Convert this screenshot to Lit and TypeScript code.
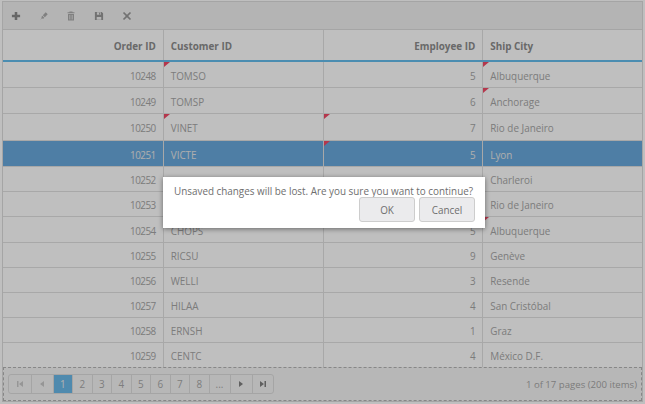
import { LitElement, css, html, nothing, svg } from 'lit';
import { customElement } from 'lit/decorators.js';

interface Order {
  id: number;
  customer: string;
  employee: number | string;
  city: string;
  dirty?: number[];
  selected?: boolean;
}

// customer / employee of 10252 and 10253 sit behind the dialog
const ORDERS: Order[] = [
  { id: 10248, customer: 'TOMSO', employee: 5, city: 'Albuquerque', dirty: [1, 3] },
  { id: 10249, customer: 'TOMSP', employee: 6, city: 'Anchorage', dirty: [3] },
  { id: 10250, customer: 'VINET', employee: 7, city: 'Rio de Janeiro', dirty: [1, 2] },
  { id: 10251, customer: 'VICTE', employee: 5, city: 'Lyon', dirty: [2], selected: true },
  { id: 10252, customer: '', employee: '', city: 'Charleroi' },
  { id: 10253, customer: '', employee: '', city: 'Rio de Janeiro' },
  { id: 10254, customer: 'CHOPS', employee: 5, city: 'Albuquerque', dirty: [3] },
  { id: 10255, customer: 'RICSU', employee: 9, city: 'Genève' },
  { id: 10256, customer: 'WELLI', employee: 3, city: 'Resende' },
  { id: 10257, customer: 'HILAA', employee: 4, city: 'San Cristóbal' },
  { id: 10258, customer: 'ERNSH', employee: 1, city: 'Graz' },
  { id: 10259, customer: 'CENTC', employee: 4, city: 'México D.F.' },
];

const TOOL_ICONS = [
  { tone: 'dark', d: svg`<path d="M4.1 1h2.8v3.1H10v2.8H6.9V10H4.1V6.9H1V4.1h3.1z"/>` },
  { tone: 'soft', d: svg`<path d="M7.4 1.4l2.2 2.2-3.2 3.2-2.2-2.2zM3.6 5.2l2.2 2.2-1.1 1.1-1.4-.3-1.9 1.5 1.5-1.9-.2-1.3z"/>` },
  { tone: 'soft', d: svg`<path d="M4 .5h3l.4.8h1.9v1.2H1.7V1.3h1.9zM2.2 3.2h6.6v7.3H2.2zM3.8 4.4v4.9h.9V4.4zm2.5 0v4.9h.9V4.4z" fill-rule="evenodd"/>` },
  { tone: 'mid', d: svg`<path d="M1 1h7.4L10 2.6V10H1zM3.2 1.4v2.8h4.4V1.4zM5.6 1.8h1.2v2H5.6zM3 6.6v3h5v-3z" fill-rule="evenodd"/>` },
  { tone: 'mid', d: svg`<path d="M2.3 1l3.2 3.2L8.7 1 10 2.3 6.8 5.5 10 8.7 8.7 10 5.5 6.8 2.3 10 1 8.7l3.2-3.2L1 2.3z"/>` },
];

const PAGES = ['1', '2', '3', '4', '5', '6', '7', '8'];

@customElement('app-root')
export class AppRoot extends LitElement {
  static override styles = css`
    :host {
      display: block;
      position: relative;
      width: 645px;
      height: 404px;
      overflow: hidden;
      background: #fff;
      font-family: "Open Sans", "Noto Sans", sans-serif;
      font-size: 9.9px;
      color: #a6a6a6;
    }
    .grid {
      box-sizing: border-box;
      height: 401px;
      margin: 1px 2px 0;
      border: 1px solid #dcdcdc;
      display: flex;
      flex-direction: column;
      background: #fff;
    }
    .toolbar {
      flex: none;
      height: 28px;
      box-sizing: border-box;
      display: flex;
      align-items: center;
      gap: 17.7px;
      padding-left: 8px;
      background: #f0f0f0;
      border-bottom: 1px solid #dcdcdc;
    }
    .toolbar svg { width: 10px; height: 10px; display: block; }
    .dark { fill: #8a8a8a; }
    .mid { fill: #989898; }
    .soft { fill: #ababab; }
    .row {
      display: grid;
      grid-template-columns: repeat(4, 1fr);
      box-sizing: border-box;
    }
    .head {
      flex: none;
      height: 32px;
      border-bottom: 2px solid #64bcec;
      font-weight: 700;
      color: #8c8c8c;
    }
    .body {
      height: 305px;
      flex: none;
      display: grid;
      grid-template-rows: 26px 26px 27px 26px 25px 25px 26px 25px 25px 25px 25px 24px;
    }
    .body .row { border-bottom: 1px solid #e0e0e0; }
    .body .row:last-child { border-bottom: none; }
    .cell {
      position: relative;
      box-sizing: border-box;
      padding: 2px 7px 0;
      display: flex;
      align-items: center;
      border-left: 1px solid #e0e0e0;
      white-space: nowrap;
    }
    .cell:first-child { border-left: none; }
    .cell.num { justify-content: flex-end; }
    .body .num { letter-spacing: -0.5px; }
    .sel { background: #68a8dc; color: #e8e8e8; }
    .dirty {
      position: absolute;
      left: 0;
      top: 0;
      width: 0;
      height: 0;
      border-top: 5px solid #f04a66;
      border-right: 6px solid transparent;
    }
    .pager {
      flex: 1;
      box-sizing: border-box;
      display: flex;
      align-items: center;
      justify-content: space-between;
      padding: 0 4px 0 3.5px;
      background: #f5f5f5;
      border: 1px dashed #b4b4b4;
      font-size: 9.6px;
    }
    .pages {
      display: flex;
      height: 20px;
      border: 1px solid #dcdcdc;
      border-radius: 3px;
      box-sizing: border-box;
      font-size: 9.9px;
    }
    .pages span {
      display: flex;
      align-items: center;
      justify-content: center;
      width: 19.5px;
      border-left: 1px solid #dcdcdc;
      box-sizing: border-box;
      color: #a8a8a8;
    }
    .pages span:first-child { border-left: none; }
    .pages span.nav { width: 22px; }
    .pages span.tail { width: 21px; }
    .pages span.on { background: #6ab8e8; color: #eee; }
    .pages svg { width: 8px; height: 8px; fill: #808080; }
    .pages svg.off { fill: #c8c8c8; }
    .overlay {
      position: absolute;
      inset: 0;
      background: rgba(0, 0, 0, 0.25);
    }
    .dialog {
      position: absolute;
      left: 163px;
      top: 177px;
      width: 322px;
      height: 51px;
      box-sizing: border-box;
      background: #fff;
      box-shadow: 0 1px 5px rgba(0, 0, 0, 0.45);
      padding: 7px 10px 0 11px;
      color: #6e6e6e;
    }
    .dialog p { margin: 0; line-height: 14px; white-space: nowrap; }
    .actions { display: flex; justify-content: flex-end; gap: 4px; margin-top: -1px; }
    .actions button {
      width: 56px;
      height: 25px;
      padding: 0;
      font: inherit;
      color: #6e6e6e;
      background: #ebebed;
      border: 1px solid #cdcdcd;
      border-radius: 3px;
    }
  `;

  private _cell(text: string | number, index: number, order?: Order, num = false) {
    return html`<div class="cell ${num ? 'num' : ''}">
      ${order?.dirty?.includes(index) ? html`<i class="dirty"></i>` : nothing}${text}
    </div>`;
  }

  override render() {
    return html`
      <div class="grid">
        <div class="toolbar">
          ${TOOL_ICONS.map((icon) => html`<svg class=${icon.tone} viewBox="0 0 11 11">${icon.d}</svg>`)}
        </div>
        <div class="row head">
          ${this._cell('Order ID', 0, undefined, true)}
          ${this._cell('Customer ID', 1)}
          ${this._cell('Employee ID', 2, undefined, true)}
          ${this._cell('Ship City', 3)}
        </div>
        <div class="body">
          ${ORDERS.map(
            (o) => html`<div class="row ${o.selected ? 'sel' : ''}">
              ${this._cell(o.id, 0, o, true)}
              ${this._cell(o.customer, 1, o)}
              ${this._cell(o.employee, 2, o, true)}
              ${this._cell(o.city, 3, o)}
            </div>`,
          )}
        </div>
        <div class="pager">
          <div class="pages">
            <span class="nav"><svg class="off" viewBox="0 0 8 8"><path d="M1 1h1.5v6H1zM7 1v6L3 4z"/></svg></span>
            <span class="nav"><svg class="off" viewBox="0 0 8 8"><path d="M6 1v6L2 4z"/></svg></span>
            ${PAGES.map((p, i) => html`<span class=${i === 0 ? 'on' : ''}>${p}</span>`)}
            <span class="tail">...</span>
            <span class="nav"><svg viewBox="0 0 8 8"><path d="M2 1v6l4-3z"/></svg></span>
            <span class="tail"><svg viewBox="0 0 8 8"><path d="M1 1v6l4-3zM5.5 1H7v6H5.5z"/></svg></span>
          </div>
          <div>1 of 17 pages (200 items)</div>
        </div>
      </div>
      <div class="overlay"></div>
      <div class="dialog">
        <p>Unsaved changes will be lost. Are you sure you want to continue?</p>
        <div class="actions"><button>OK</button><button>Cancel</button></div>
      </div>
    `;
  }
}
